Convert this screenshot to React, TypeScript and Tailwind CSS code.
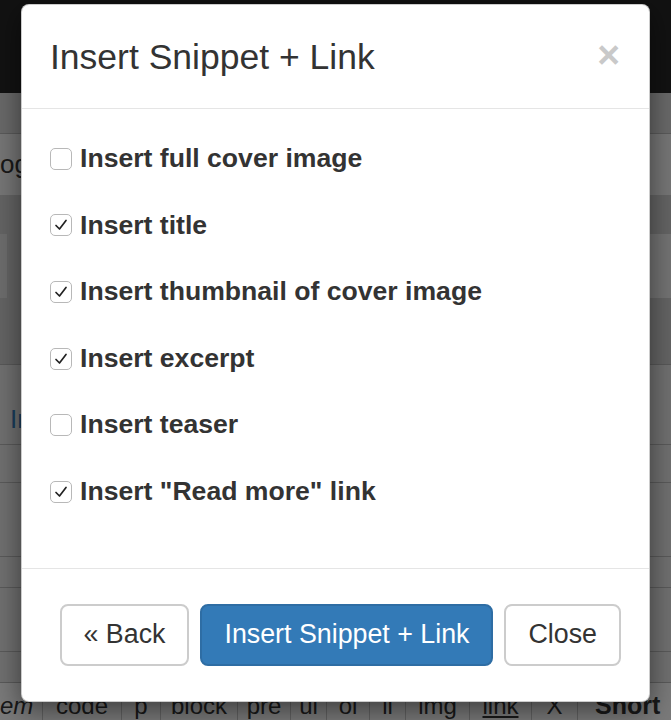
import React from "react";

const options = [
  { label: "Insert full cover image", checked: false },
  { label: "Insert title", checked: true },
  { label: "Insert thumbnail of cover image", checked: true },
  { label: "Insert excerpt", checked: true },
  { label: "Insert teaser", checked: false },
  { label: 'Insert "Read more" link', checked: true },
];

const toolbar = [
  { label: "em", w: "w-[43px] justify-start", cls: "italic" },
  { label: "code", w: "w-[79px] justify-center", cls: "" },
  { label: "p", w: "w-[39px] justify-center", cls: "" },
  { label: "block", w: "w-[77px] justify-center", cls: "" },
  { label: "pre", w: "w-[53px] justify-center", cls: "" },
  { label: "ul", w: "w-[36px] justify-center", cls: "" },
  { label: "ol", w: "w-[43px] justify-center", cls: "" },
  { label: "li", w: "w-[36px] justify-center", cls: "" },
  { label: "img", w: "w-[64px] justify-center", cls: "" },
  { label: "link", w: "w-[62px] justify-center", cls: "underline" },
  { label: "X", w: "w-[46px] justify-center", cls: "" },
];

function Checkbox({ checked }: { checked: boolean }) {
  return (
    <span className="flex h-[22px] w-[22px] shrink-0 items-center justify-center rounded-[5px] border border-[#b8b8b8] bg-white">
      {checked && (
        <svg width="16" height="16" viewBox="0 0 16 16" fill="none">
          <path
            d="M3 8.5 L6.5 12 L13 3.5"
            stroke="#222"
            strokeWidth="1.7"
            strokeLinecap="round"
            strokeLinejoin="round"
          />
        </svg>
      )}
    </span>
  );
}

function BackgroundPage() {
  return (
    <div className="flex flex-col">
      <div className="h-[93px] bg-[#242424]" />
      <div className="h-[41px] border-b border-[#b4b4b4] bg-[#d2d2d2]" />
      <div className="flex h-[61px] items-center bg-[#ececec] text-[26px] text-[#333]">
        <span>og</span>
      </div>
      <div className="flex h-[170px] flex-col border-b border-[#b0b0b0] bg-[#c8c8c8]">
        <div className="mt-[39px] flex h-[64px]">
          <div className="w-[7px] bg-[#dadada]" />
          <div className="flex-1" />
          <div className="w-[60px] bg-[#e6e6e6]" />
        </div>
      </div>
      <div className="flex h-[80px] items-center border-b border-[#b4b4b4] bg-[#e0e0e0] pt-[30px] text-[26px] text-[#337ab7]">
        <span className="ml-[10px]">Insert</span>
      </div>
      <div className="h-[38px] border-b border-[#b4b4b4] bg-[#e0e0e0]" />
      <div className="h-[74px] border-b border-[#b4b4b4] bg-[#e0e0e0]" />
      <div className="h-[31px] border-b border-[#b4b4b4] bg-[#e0e0e0]" />
      <div className="h-[64px] border-b border-[#b4b4b4] bg-[#e0e0e0]" />
      <div className="h-[31px] border-b border-[#b4b4b4] bg-[#e0e0e0]" />
      <div className="flex h-[46px] bg-[#f4f4f4] text-[24px] text-[#333]">
        {toolbar.map((t) => (
          <div
            key={t.label}
            className={`flex shrink-0 items-center border-r border-[#c4c4c4] ${t.w}`}
          >
            <span className={t.cls}>{t.label}</span>
          </div>
        ))}
        <div className="flex items-center pl-[17px] text-[25px] font-bold">Short</div>
      </div>
    </div>
  );
}

export default function App() {
  return (
    <div
      className="relative h-[720px] w-full overflow-hidden"
      style={{ fontFamily: '"Liberation Sans", Arial, sans-serif' }}
    >
      <BackgroundPage />
      <div className="absolute inset-0 bg-black/50" />

      <div className="absolute left-[21px] top-[4px] w-[629px] rounded-[8px] border border-black/20 bg-white shadow-[0_8px_28px_rgba(0,0,0,0.5)]">
        <div className="flex h-[104px] items-center justify-between border-b border-[#e5e5e5] pl-[28px] pr-[29px]">
          <h4 className="text-[35.5px] leading-[48px] text-[#333]">Insert Snippet + Link</h4>
          <button className="-mt-[4px] text-[39px] font-bold leading-none text-[#c9c9c9]">
            ×
          </button>
        </div>

        <div className="flex flex-col gap-[29px] pl-[28px] pr-[29px] pb-[57px] pt-[31px]">
          {options.map((o) => (
            <label key={o.label} className="flex h-[37.6px] items-center gap-[8px]">
              <Checkbox checked={o.checked} />
              <span className="text-[26.6px] font-bold leading-[37.6px] text-[#333]">
                {o.label}
              </span>
            </label>
          ))}
        </div>

        <div className="flex justify-end gap-[11px] border-t border-[#e5e5e5] pl-[29px] pr-[28px] py-[35px]">
          <button className="h-[62px] rounded-[8px] border-2 border-[#cccccc] bg-white px-[22px] text-[26.8px] text-[#333]">
            « Back
          </button>
          <button className="h-[62px] rounded-[8px] border-2 border-[#2e6da4] bg-[#337ab7] px-[22px] text-[26.8px] text-white">
            Insert Snippet + Link
          </button>
          <button className="h-[62px] rounded-[8px] border-2 border-[#cccccc] bg-white px-[22px] text-[26.8px] text-[#333]">
            Close
          </button>
        </div>
      </div>
    </div>
  );
}
